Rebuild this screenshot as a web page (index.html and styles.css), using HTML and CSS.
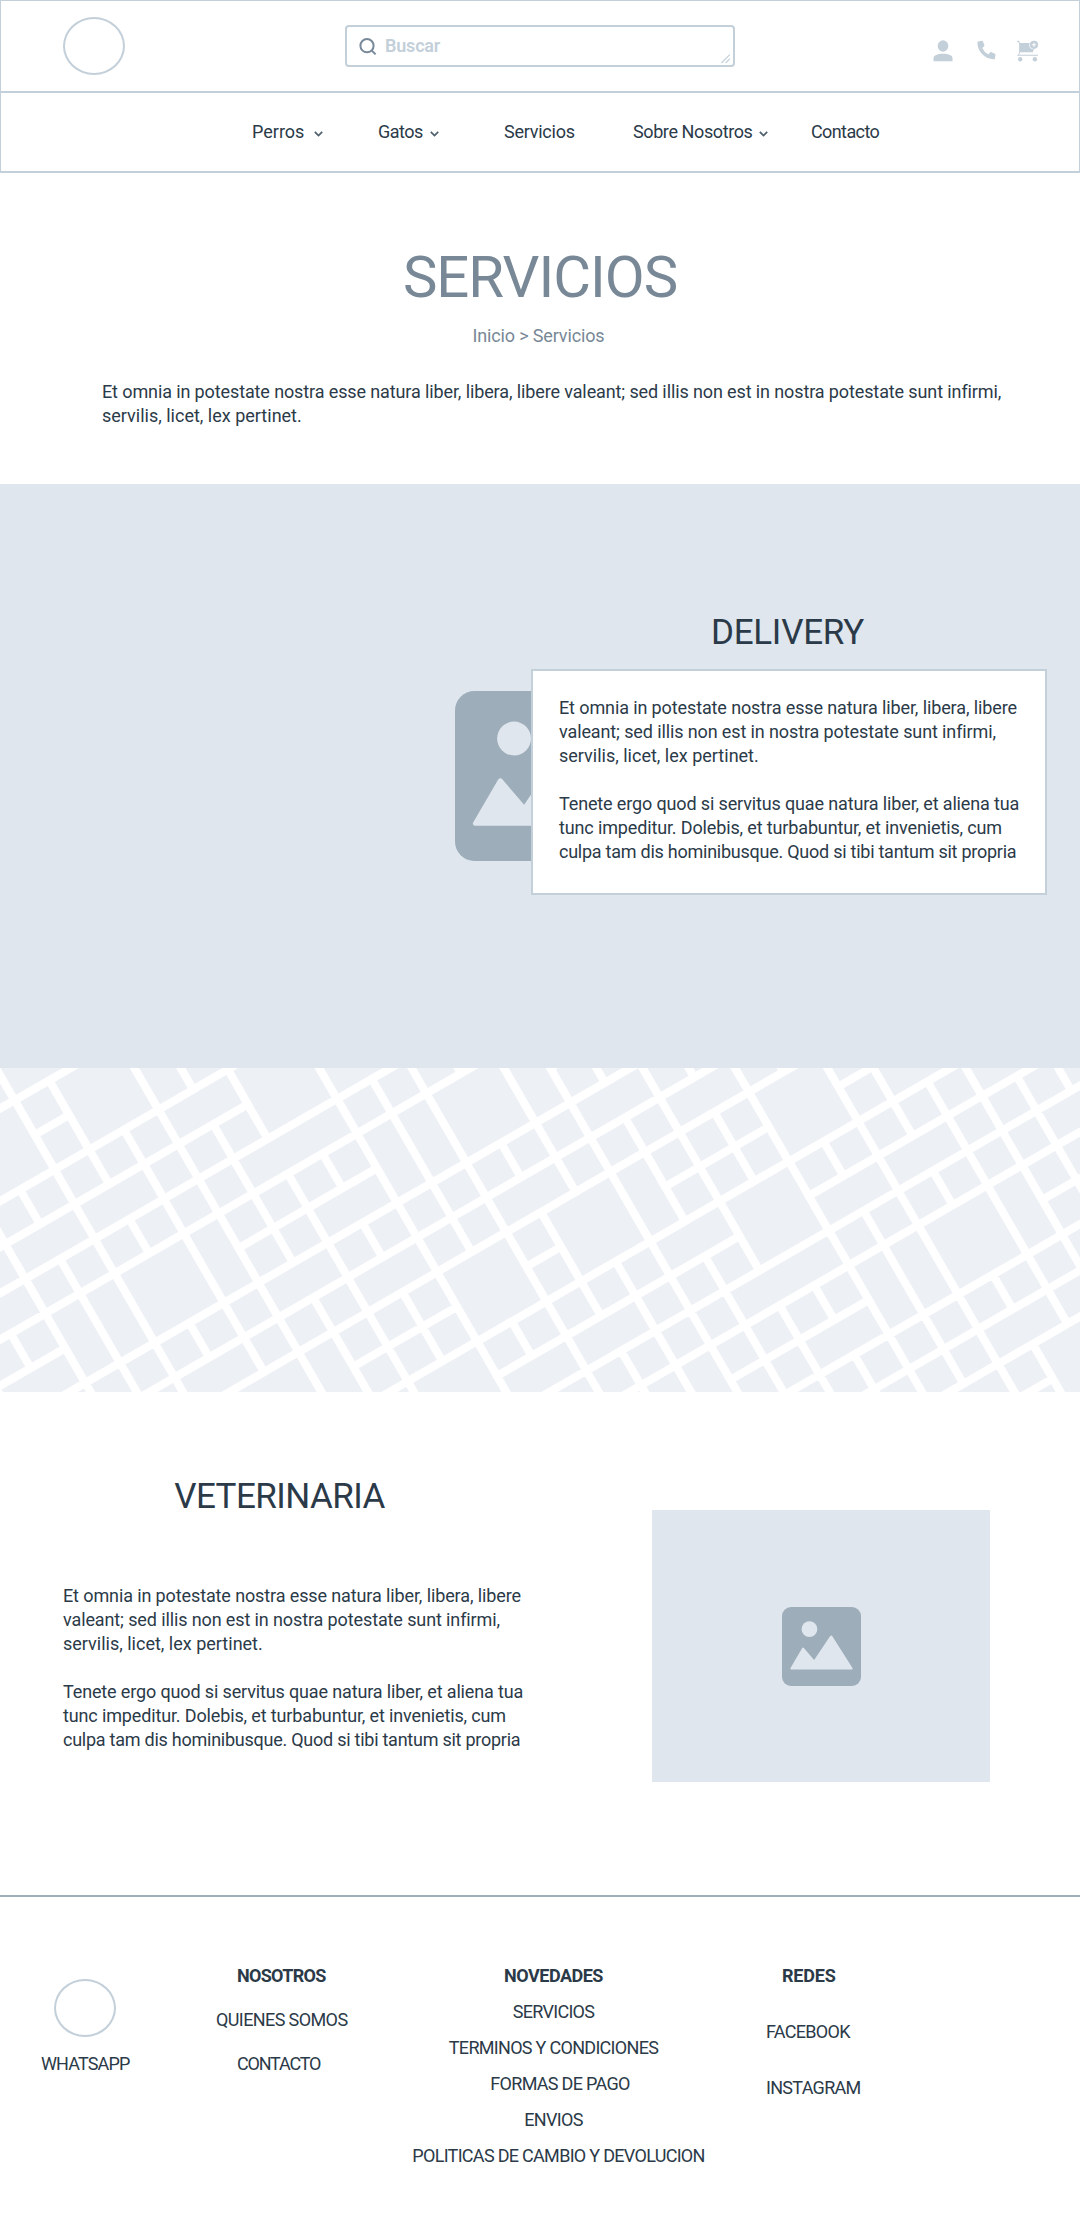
FILE: index.html
```html
<!DOCTYPE html>
<html lang="es">
<head>
<meta charset="utf-8">
<title>Servicios</title>
<link rel="stylesheet" href="styles.css">
</head>
<body>
<header class="header">
  <div class="topbar">
    <div class="logo"></div>
    <div class="search">
      <svg class="search-icon" width="18" height="18" viewBox="0 0 18 18" fill="none" stroke="#778899" stroke-width="2"><circle cx="8" cy="7.7" r="6.6"/><path d="M12.6 12.4L16.6 16.4"/></svg>
      <span class="placeholder">Buscar</span>
      <svg class="grip" width="10" height="10" viewBox="0 0 10 10" stroke="#c3cfd9" stroke-width="1.1"><path d="M0.5 9L8.8 0.7M4.7 9L9 4.7"/></svg>
    </div>
    <div class="actions">
      <svg width="20" height="22" viewBox="0 0 20 22"><ellipse cx="10" cy="6" rx="5.3" ry="5.7"/><path d="M0.5 21.3v-3c0-2.8 4-4.5 9.5-4.5s9.5 1.700 9.500 4.500v3z"/></svg>
      <svg width="19" height="20" viewBox="0 0 19 20"><path d="M1.300 1.500L4.700.700q.9-.1 1.200.7l1.500 3.700q.2.700-.3 1.200L5.200 8q2 4.400 6.200 6.400l1.600-2q.5-.6 1.200-.3l3.600 1.600q.8.400.7 1.200l-.6 3.500q-.2.900-1.100.9C8 19.300.4 11.800.4 2.600q0-.9.9-1.100z"/></svg>
      <svg width="22" height="22" viewBox="0 0 22 22"><path d="M0 .8h1.800l1 1.700v10.900L1.800 14.700H21v1H0l2-2.500V3.100L.9 1.800H0z"/><path d="M2.600 3h10.200a4 4 0 0 0 4.100 6.100l-1.100 3.100H3.600l-1 .9z"/><circle cx="17" cy="4.800" r="4.100"/><path d="M17 2.700v4.200M14.900 4.800h4.200" stroke="#fff" stroke-width="1"/><circle cx="3.200" cy="19.300" r="2.200"/><circle cx="17.900" cy="19.300" r="2.200"/></svg>
    </div>
  </div>
  <nav class="nav">
    <a class="nav-item nav-item-wide"><span>Perros</span><svg class="chevron" viewBox="0 0 9 6"><path d="M.8.8l3.700 3.700L8.200.8"/></svg></a>
    <a class="nav-item"><span class="tight-4">Gatos</span><svg class="chevron" viewBox="0 0 9 6"><path d="M.8.8l3.700 3.700L8.200.8"/></svg></a>
    <a class="nav-item"><span class="tight-2">Servicios</span></a>
    <a class="nav-item"><span class="tight-3">Sobre Nosotros</span><svg class="chevron" viewBox="0 0 9 6"><path d="M.8.8l3.700 3.700L8.200.8"/></svg></a>
    <a class="nav-item"><span class="tight-5">Contacto</span></a>
  </nav>
</header>

<section class="intro">
  <h1 class="title">SERVICIOS</h1>
  <div class="crumbs">Inicio &gt; Servicios</div>
  <p class="lead"><span class="tight-1">Et omnia in potestate nostra esse natura liber, libera, libere valeant; sed illis non est in nostra potestate sunt infirmi,</span><br>servilis, licet, lex pertinet.</p>
</section>

<section class="delivery">
  <svg class="picture picture-large" viewBox="0 0 236 236"><rect width="236" height="236" rx="27" fill="#9dadb9"/><circle cx="82" cy="66" r="23.500"/><path d="M60 123q3-4 6 0l30 35 48-71q3-4 6 0l61 96q1 4-3 4H28q-4 0-3-4z"/></svg>
  <div class="delivery-content">
    <h2 class="heading">DELIVERY</h2>
    <div class="card copy">
      <p><span class="tight-1">Et omnia in potestate nostra esse natura liber, libera, libere<br>valeant; sed illis non est in nostra potestate sunt infirmi,</span><br>servilis, licet, lex pertinet.</p>
      <p><span class="tight-line">Tenete ergo quod si servitus quae natura liber, et aliena tua<br>tunc impeditur. Dolebis, et turbabuntur, et invenietis, cum</span><br><span class="tight-2">culpa tam dis hominibusque. Quod si tibi tantum sit propria</span></p>
    </div>
  </div>
</section>

<svg class="map" width="1080" height="324" viewBox="0 0 1080 324">
  <!-- one unit is one street block, on a grid turned by 30 degrees -->
  <g transform="matrix(34.641 -20 20 34.641 158.500 41.600)">
    <path class="streets" d="M-9-6H24M-9-5H24M-9-4H24M-9-3H24M-9-2H24M-9-1H24M-9 0H24M-9 1H24M-9 2H24M-9 3H24M-9 4H24M-9 5H24M-9 6H24M-9 7H24M-9 8H24M-9 9H24M-9 10H24M-9 11H24M-9 12H24M-9 13H24M-9 14H24M-9 15H24M-9 16H24M-9 17H24M-9 18H24M-9 19H24
    M-8-6V20M-7-6V20M-6-6V20M-5-6V20M-4-6V20M-3-6V20M-2-6V20M-1-6V20M0-6V20M1-6V20M2-6V20M3-6V20M4-6V20M5-6V20M6-6V20M7-6V20M8-6V20M9-6V20M10-6V20M11-6V20M12-6V20M13-6V20M14-6V20M15-6V20M16-6V20M17-6V20M18-6V20M19-6V20M20-6V20M21-6V20M22-6V20"/>
    <!-- squares -->
    <path class="blocks" d="M-5-2h2v2h-2zM-2-2h2v2h-2zM2 0h2v2h-2zM-3 3h2v2h-2zM-2 7h2v2h-2zM6 3h2v2h-2zM4 7h2v2h-2zM2 9h2v2h-2zM7 7h2v2h-2zM13 7h2v2h-2zM11 9h2v2h-2zM16 7h2v2h-2zM15 12h2v2h-2zM16 16h2v2h-2zM13 16h2v2h-2z"/>
    <!-- long blocks along the avenues -->
    <path class="blocks" d="M-3-3h2v1h-2zM-3 1h2v1h-2zM-5 1h2v1h-2zM-7 2h2v1h-2zM-7 4h2v1h-2zM-3 6h2v1h-2zM0 0h2v1h-2zM1 2h3v1h-3zM2 4h2v1h-2zM0 5h2v1h-2zM4 1h2v1h-2zM2 6h2v1h-2zM6 6h2v1h-2zM9 5h2v1h-2zM11 6h2v1h-2zM4 10h2v1h-2zM6 10h2v1h-2zM9 9h2v1h-2zM18 9h2v1h-2zM13 10h2v1h-2zM15 10h2v1h-2zM10 11h3v1h-3zM19 11h2v1h-2zM11 13h2v1h-2zM15 15h2v1h-2z"/>
    <!-- long blocks along the cross streets -->
    <path class="blocks" d="M-4 3h1v2h-1zM-5 3h1v2h-1zM-1 3h1v2h-1zM0-2h1v2h-1zM0 7h1v2h-1zM4 3h1v2h-1zM5 3h1v2h-1zM8 3h1v2h-1zM9 7h1v2h-1zM8 12h1v2h-1zM13 12h1v2h-1zM14 12h1v2h-1zM17 12h1v2h-1z"/>
  </g>
</svg>

<section class="vet">
  <div class="vet-text">
    <h2 class="heading">VETERINARIA</h2>
    <div class="copy">
      <p><span class="tight-1">Et omnia in potestate nostra esse natura liber, libera, libere<br>valeant; sed illis non est in nostra potestate sunt infirmi,</span><br>servilis, licet, lex pertinet.</p>
      <p><span class="tight-line">Tenete ergo quod si servitus quae natura liber, et aliena tua<br>tunc impeditur. Dolebis, et turbabuntur, et invenietis, cum</span><br><span class="tight-2">culpa tam dis hominibusque. Quod si tibi tantum sit propria</span></p>
    </div>
  </div>
  <div class="frame">
    <svg class="picture" viewBox="0 0 236 236"><rect width="236" height="236" rx="27" fill="#9dadb9"/><circle cx="82" cy="66" r="23.500"/><path d="M60 123q3-4 6 0l30 35 48-71q3-4 6 0l61 96q1 4-3 4H28q-4 0-3-4z"/></svg>
  </div>
</section>

<footer class="footer">
  <div class="col col-chat"><div class="logo"></div><span>WHATSAPP</span></div>
  <div class="col col-about"><b>NOSOTROS</b><span class="outdent">QUIENES SOMOS</span><span class="contact">CONTACTO</span></div>
  <div class="col col-news"><b>NOVEDADES</b><span>SERVICIOS</span><span>TERMINOS Y CONDICIONES</span><span class="nudge">FORMAS DE PAGO</span><span>ENVIOS</span><span class="policy">POLITICAS DE CAMBIO Y DEVOLUCION</span></div>
  <div class="col col-social"><b>REDES</b><span>FACEBOOK</span><span>INSTAGRAM</span></div>
</footer>
</body>
</html>
```
FILE: styles.css
```css
* { box-sizing: border-box; }
body {
  margin: 0;
  background: #fff;
  color: #2b3a48;
  font: 18px/24px Roboto, "Liberation Sans", sans-serif;
  white-space: nowrap;
}
h1, h2, p { margin: 0; font-weight: 400; }
svg { display: block; flex: none; }

/* letter fitting */
.tight-1 { letter-spacing: -.115px; }
.tight-line { letter-spacing: -.14px; }
.tight-2 { letter-spacing: -.25px; }
.tight-3 { letter-spacing: -.4px; }
.tight-4 { letter-spacing: -.5px; }
.tight-5 { letter-spacing: -.6px; }

.header { height: 173px; border: 1px solid #c3cfd9; border-bottom-width: 2px; }
.topbar { display: flex; height: 92px; border-bottom: 2px solid #c3cfd9; padding-left: 62px; }
.logo { width: 62px; height: 58px; border: 2px solid #c3cfd9; border-radius: 50%; }
.topbar .logo { margin-top: 16px; }
.search {
  display: flex; width: 390px; height: 42px; margin: 24px 0 0 220px;
  border: 2px solid #c3cfd9; border-radius: 4px; padding-left: 12px;
}
.search-icon { margin-top: 11px; }
.placeholder { margin: 7px 0 0 8px; color: #c3cfd9; font-weight: 600; letter-spacing: -.2px; }
.grip { margin: 27px 2px 0 auto; }
.actions { display: flex; margin: 39px 0 0 198px; gap: 24px; fill: #c3cfd9; }
.actions svg:last-child { margin-left: -3px; }

.nav {
  display: grid; grid-template-columns: 126px 126px 129px 178px auto;
  padding: 27px 0 0 251px;
}
.nav-item { display: flex; align-items: center; gap: 7px; }
.nav-item-wide { gap: 10px; }
.chevron { width: 9px; height: 6px; margin-top: 3px; fill: none; stroke: #4f5f6d; stroke-width: 1.700; }

.intro { height: 311px; padding-top: 70px; text-align: center; }
.title { font-size: 58px; line-height: 68px; letter-spacing: -1px; color: #788896; }
.crumbs { margin: 13px 3px 0 0; color: #788896; letter-spacing: -.15px; }
.lead { margin: 32px 0 0 102px; text-align: left; }

.delivery { display: flex; height: 584px; background: #dfe6ee; fill: #dfe6ee; }
.picture { width: 79px; height: 79px; fill: #dfe6ee; }
.picture-large { width: 170px; height: 170px; margin: 207px 0 0 455px; }
.delivery-content { position: relative; width: 516px; margin: 128px 0 0 -94px; }
.heading { font-size: 35px; line-height: 42px; text-align: center; }
.delivery .heading { padding-right: 3px; letter-spacing: -.25px; }
.card { margin-top: 15px; height: 226px; padding: 25px 0 0 26px; background: #fff; border: 2px solid #c3cfd9; }
.copy p + p { margin-top: 24px; }

.map { background: #edf0f5; }
.streets { fill: none; stroke: #fff; stroke-width: .2; }
.blocks { fill: #edf0f5; stroke: #fff; stroke-width: .2; }

.vet { display: flex; height: 503px; padding-left: 63px; }
.vet-text { width: 589px; padding-top: 84px; }
.vet .heading { width: 433px; letter-spacing: -.55px; }
.vet .copy { margin-top: 66px; }
.frame { display: flex; align-items: center; justify-content: center; width: 338px; height: 272px; margin-top: 118px; background: #dfe6ee; }

.footer { display: flex; height: 321px; border-top: 2px solid #9dadb9; letter-spacing: -.7px; }
.col { display: flex; flex-direction: column; padding-top: 67px; }
.col-chat { width: 216px; padding-left: 41px; padding-top: 82px; }
.col-chat .logo { margin-left: 13px; }
.col-chat span { margin-top: 15px; letter-spacing: -.85px; }
.col-about { width: 196px; padding-left: 21px; gap: 20px; }
.outdent { margin-left: -21px; letter-spacing: -.6px; }
.contact { letter-spacing: -1.200px; }
.col-news { width: 283px; align-items: center; gap: 12px; }
.col-news b { letter-spacing: -.5px; }
.nudge { margin-left: 13px; }
.policy { margin-left: 10px; }
.col-social { padding-left: 71px; gap: 32px; }
.col-social b { padding-left: 16px; letter-spacing: -.2px; }
```
